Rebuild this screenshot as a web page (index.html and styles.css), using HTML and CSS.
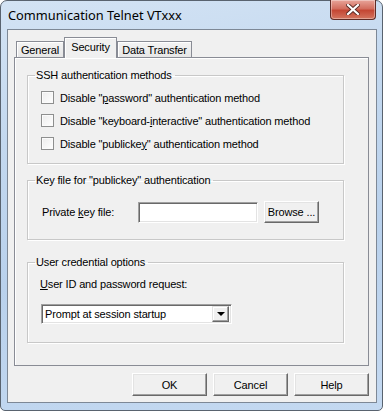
FILE: index.html
```html
<!DOCTYPE html>
<html lang="en">
<head>
  <meta charset="UTF-8">
  <title>Communication Telnet VTxxx</title>
  <link rel="stylesheet" href="styles.css">
</head>
<body>
  <div class="window">
    <div class="titlebar">
      <span class="title">Communication Telnet VTxxx</span>
      <div class="close">
        <svg width="14" height="11" viewBox="0 0 14 11">
          <path d="M2 1 L12 10 M12 1 L2 10" stroke="#5a2a24" stroke-width="4" stroke-linecap="square"/>
          <path d="M2 1 L12 10 M12 1 L2 10" stroke="#ffffff" stroke-width="2.2" stroke-linecap="square"/>
        </svg>
      </div>
    </div>
    <div class="client">
      <div class="tabs">
        <div class="tab tab-general">General</div>
        <div class="tab tab-security selected">Security</div>
        <div class="tab tab-data">Data Transfer</div>
      </div>
      <div class="panel">
        <fieldset class="group group-ssh">
          <legend>SSH authentication methods</legend>
          <div class="check-row"><span class="checkbox"></span>Disable "<u>p</u>assword" authentication method</div>
          <div class="check-row"><span class="checkbox"></span>Disable "keyboard-<u>i</u>nteractive" authentication method</div>
          <div class="check-row"><span class="checkbox"></span>Disable "publicke<u>y</u>" authentication method</div>
        </fieldset>
        <fieldset class="group group-key">
          <legend>Key file for "publickey" authentication</legend>
          <div class="key-row">
            <span class="key-label">Private <u>k</u>ey file:</span>
            <span class="textbox"></span>
            <span class="button browse">Browse ...</span>
          </div>
        </fieldset>
        <fieldset class="group group-cred">
          <legend>User credential options</legend>
          <div class="cred-label"><u>U</u>ser ID and password request:</div>
          <div class="combo">
            <span class="combo-text">Prompt at session startup</span>
            <span class="combo-arrow"><span class="triangle"></span></span>
          </div>
        </fieldset>
      </div>
      <div class="buttons">
        <span class="button">OK</span>
        <span class="button">Cancel</span>
        <span class="button">Help</span>
      </div>
    </div>
  </div>
</body>
</html>
```

FILE: styles.css
```css
* {
  margin: 0;
  padding: 0;
  box-sizing: border-box;
}
body {
  width: 383px;
  height: 411px;
  overflow: hidden;
  background: #ffffff;
  font-family: "Liberation Sans", Arial, sans-serif;
  font-size: 11px;
  letter-spacing: -0.15px;
  color: #000;
}
.window {
  width: 383px;
  height: 411px;
  border: 1px solid #59636f;
  border-radius: 7px 7px 5px 5px;
  background: linear-gradient(170deg, #d3e3f4 0%, #c3d8ef 30%, #b9d1ec 60%, #c4d9f1 100%);
  display: flex;
  flex-direction: column;
}
.titlebar {
  height: 28px;
  display: flex;
  justify-content: space-between;
  align-items: flex-start;
  padding-left: 7px;
}
.title {
  font-family: "Noto Sans", "Open Sans", sans-serif;
  font-size: 12.8px;
  letter-spacing: 0;
  line-height: 16px;
  padding-top: 6px;
  color: #000;
}
.close {
  width: 46px;
  height: 20px;
  margin-top: -1px;
  margin-right: 6px;
  border: 1px solid #5f2b25;
  border-top: none;
  border-radius: 0 0 4px 4px;
  background: linear-gradient(#e8a59a 0%, #d36e5f 45%, #c44734 55%, #d4755f 100%);
  box-shadow: inset 0 0 0 1px rgba(255, 255, 255, 0.35);
  display: flex;
  align-items: center;
  justify-content: center;
}
.client {
  width: 370px;
  height: 374px;
  margin-left: 6px;
  border: 1px solid #7d8896;
  background: #f0f0f0;
  padding: 7px 7px 6px 6px;
  display: flex;
  flex-direction: column;
}
.tabs {
  height: 20px;
  display: flex;
  align-items: flex-end;
  position: relative;
  z-index: 1;
}
.tab {
  height: 16px;
  border: 1px solid #898c95;
  border-bottom: none;
  background: linear-gradient(#f4f4f4, #e6e6e6);
  box-shadow: inset 1px 1px 0 #ffffff;
  text-align: center;
  line-height: 14px;
  padding-top: 1px;
}
.tab-general {
  width: 48px;
  margin-left: 2px;
}
.tab-security {
  width: 53px;
}
.tab-data {
  width: 75px;
}
.tab.selected {
  height: 21px;
  margin-bottom: -1px;
  background: #f0f0f0;
  line-height: 13px;
  padding-top: 3px;
}
.panel {
  height: 309px;
  border: 1px solid #898c95;
  box-shadow: inset 1px 1px 0 #ffffff;
  padding-top: 11px;
}
.group {
  margin: 0 24px 0 12px;
  border: 1px solid #c8c8c8;
  box-shadow: 1px 1px 0 #ffffff, inset 1px 1px 0 #ffffff;
  padding-left: 13px;
}
.group legend {
  line-height: 13px;
  padding: 0 3px 0 1px;
  margin-left: -6px;
}
.group-ssh {
  padding-top: 4px;
  padding-bottom: 8px;
}
.check-row {
  height: 23px;
  display: flex;
  align-items: center;
}
.checkbox {
  width: 13px;
  height: 13px;
  margin-right: 6px;
  border: 1px solid #8e8f8f;
  background: linear-gradient(135deg, #ececec, #ffffff);
  box-shadow: inset 0 0 0 1px #fbfbfb;
}
.group-key {
  margin-top: 10px;
  padding-top: 14px;
  padding-bottom: 16px;
}
.key-row {
  height: 22px;
  display: flex;
  align-items: center;
}
.key-label {
  width: 96px;
  margin-left: 1px;
}
.textbox {
  width: 120px;
  height: 21px;
  margin-right: 6px;
  background: #ffffff;
  border-top: 1px solid #a0a0a0;
  border-left: 1px solid #a0a0a0;
  border-right: 1px solid #ffffff;
  border-bottom: 1px solid #ffffff;
  box-shadow: inset 1px 1px 0 #696969, inset -1px -1px 0 #e3e3e3;
}
.button {
  display: flex;
  align-items: center;
  justify-content: center;
  height: 23px;
  width: 75px;
  background: #f0f0f0;
  border-top: 1px solid #ffffff;
  border-left: 1px solid #ffffff;
  border-right: 1px solid #696969;
  border-bottom: 1px solid #696969;
  box-shadow: inset -1px -1px 0 #a0a0a0, inset 1px 1px 0 #e3e3e3;
}
.browse {
  width: 55px;
  height: 22px;
}
.group-cred {
  margin-top: 16px;
  padding-top: 9px;
  padding-bottom: 18px;
}
.cred-label {
  line-height: 13px;
  margin-left: -1px;
}
.combo {
  width: 191px;
  height: 20px;
  margin-top: 13px;
  background: #ffffff;
  border-top: 1px solid #a0a0a0;
  border-left: 1px solid #a0a0a0;
  border-right: 1px solid #ffffff;
  border-bottom: 1px solid #ffffff;
  box-shadow: inset 1px 1px 0 #696969, inset -1px -1px 0 #e3e3e3;
  display: flex;
  align-items: center;
  justify-content: space-between;
  padding: 2px 2px 2px 3px;
}
.combo-arrow {
  width: 17px;
  height: 16px;
  background: #f0f0f0;
  border-top: 1px solid #e3e3e3;
  border-left: 1px solid #e3e3e3;
  border-right: 1px solid #696969;
  border-bottom: 1px solid #696969;
  box-shadow: inset -1px -1px 0 #a0a0a0, inset 1px 1px 0 #ffffff;
  display: flex;
  align-items: center;
  justify-content: center;
}
.triangle {
  width: 0;
  height: 0;
  border-left: 4px solid transparent;
  border-right: 4px solid transparent;
  border-top: 4px solid #000;
}
.buttons {
  margin-top: 7px;
  display: flex;
  justify-content: flex-end;
  gap: 6px;
}
```
